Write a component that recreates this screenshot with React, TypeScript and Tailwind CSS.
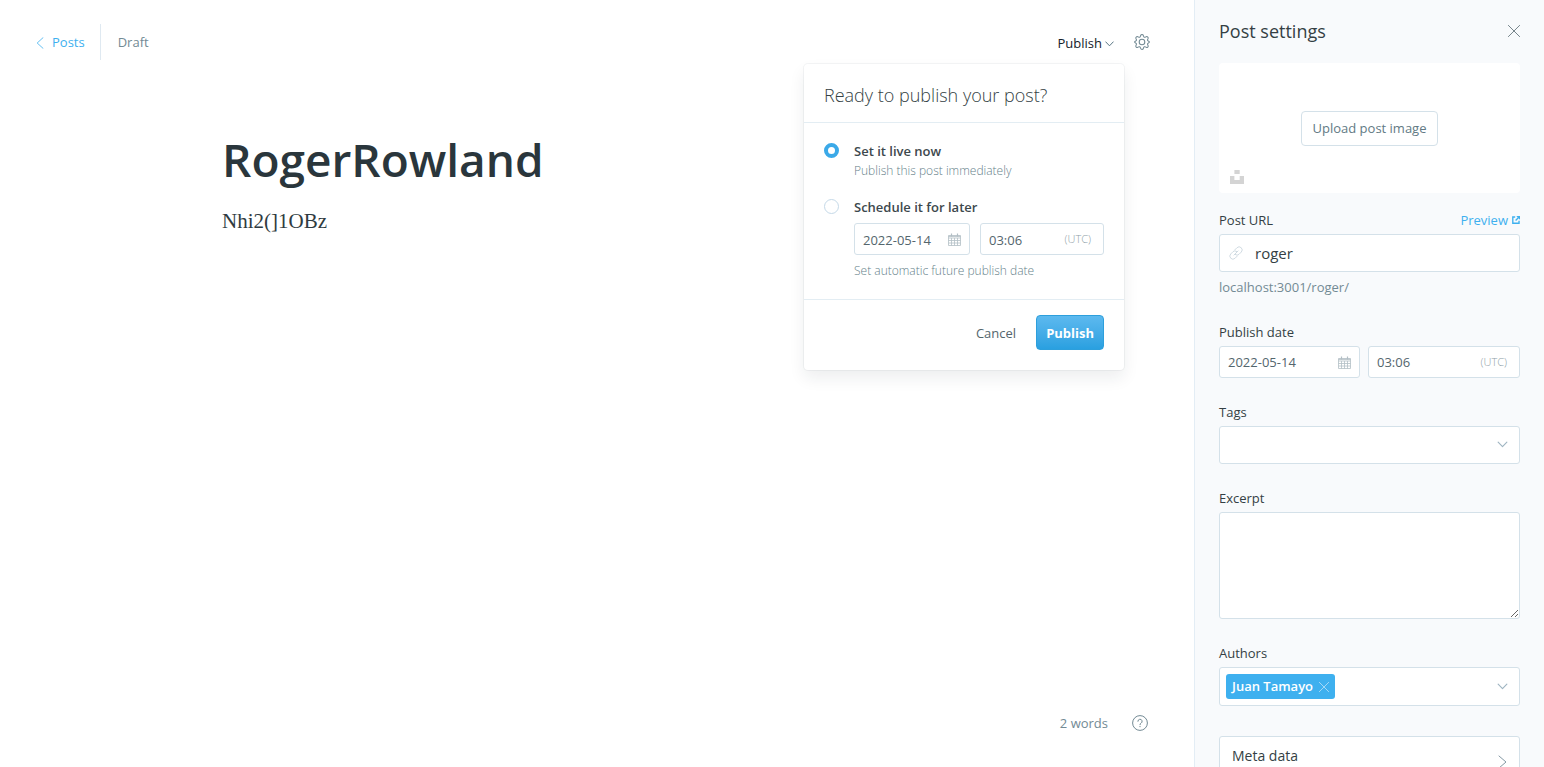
import React, { useState } from "react";
import type { ReactNode } from "react";

type IconProps = { className?: string };

function ArrowLeft({ className }: IconProps) {
  return (
    <svg viewBox="0 0 8 12" className={className} fill="none" stroke="currentColor" strokeWidth=".8" aria-hidden="true">
      <path d="M7 .7 1.2 6 7 11.3" strokeLinecap="round" />
    </svg>
  );
}

function ArrowRight({ className }: IconProps) {
  return (
    <svg viewBox="0 0 9 14" className={className} fill="none" stroke="currentColor" aria-hidden="true">
      <path d="M1 1 8 7 1 13" strokeLinecap="round" />
    </svg>
  );
}

function ArrowDown({ className }: IconProps) {
  return (
    <svg viewBox="0 0 12 8" className={className} fill="none" stroke="currentColor" strokeWidth="1.3" aria-hidden="true">
      <path d="M1 1.2 6 6.4 11 1.2" strokeLinecap="round" strokeLinejoin="round" />
    </svg>
  );
}

function Cross({ className }: IconProps) {
  return (
    <svg viewBox="0 0 12 12" className={className} fill="none" stroke="currentColor" strokeWidth=".8" aria-hidden="true">
      <path d="M.4 .4 11.6 11.6M11.6 .4 .4 11.6" strokeLinecap="round" />
    </svg>
  );
}

function Gear({ className }: IconProps) {
  return (
    <svg viewBox="0 0 24 24" className={className} fill="none" stroke="currentColor" strokeWidth="1.6" strokeLinejoin="round" aria-hidden="true">
      <circle cx="12" cy="12" r="4.2" />
      <path d="M14 2.300a2.100 2.100 0 0 0-4 0l-.4 1.300a2 2 0 0 1-2.700 1.100L5.700 4.100A2.100 2.100 0 0 0 2.900 6.900l.700 1.300a2 2 0 0 1-1.100 2.500l-.700.200a1.200 1.200 0 0 0 0 2.300l.700.200a2 2 0 0 1 1.100 2.500l-.700 1.300a2.100 2.100 0 0 0 2.800 2.800l1.200-.700a2 2 0 0 1 2.700 1.100l.4 1.300a2.100 2.100 0 0 0 4 0l.4-1.300a2 2 0 0 1 2.700-1.100l1.200.700a2.100 2.100 0 0 0 2.800-2.800l-.700-1.300a2 2 0 0 1 1.100-2.500l.700-.200a1.200 1.200 0 0 0 0-2.300l-.700-.200a2 2 0 0 1-1.100-2.500l.700-1.300a2.100 2.100 0 0 0-2.800-2.800l-1.200.600a2 2 0 0 1-2.700-1.100z" />
    </svg>
  );
}

function Help({ className }: IconProps) {
  return (
    <svg viewBox="0 0 16 16" className={className} fill="none" stroke="currentColor" aria-hidden="true">
      <circle cx="8" cy="8" r="7.400" />
      <path d="M5.900 6.300a2.100 2.100 0 1 1 3.100 1.900c-.700.400-1 .800-1 1.500" strokeLinecap="round" />
      <circle cx="8" cy="11.600" r=".700" fill="currentColor" stroke="none" />
    </svg>
  );
}

function Calendar({ className }: IconProps) {
  return (
    <svg viewBox="0 0 13 13" className={className} fill="none" stroke="currentColor" strokeWidth=".8" aria-hidden="true">
      <path d="M.5 2.500H12.500V12.500H.5ZM.5 5H12.500M.5 7.500H12.500M.5 10H12.500M3.500 5V12.500M6.500 5V12.500M9.500 5V12.500" />
      <path d="M3.500 .5V3.500M9.500 .5V3.500" strokeWidth="1.200" />
      <path d="M.5 3.300H12.500" strokeWidth="1" />
    </svg>
  );
}

function LinkIcon({ className }: IconProps) {
  return (
    <svg viewBox="0 0 24 24" className={className} fill="none" stroke="currentColor" strokeWidth="1.700" strokeLinecap="round" strokeLinejoin="round" aria-hidden="true">
      <path d="M8.500 15.500 15.500 8.500" />
      <path d="M9.800 6.800 13.600 3a4.900 4.900 0 0 1 7.400 7.400l-3.800 3.800a4.900 4.900 0 0 1-6.400.500" />
      <path d="M14.200 17.200 10.400 21A4.900 4.900 0 0 1 3 13.600l3.800-3.800a4.900 4.900 0 0 1 6.400-.500" />
    </svg>
  );
}

function ExternalIcon({ className }: IconProps) {
  return (
    <svg viewBox="0 0 10 10" className={className} fill="none" stroke="currentColor" strokeWidth="1.700" aria-hidden="true">
      <path d="M4 1.200H1V9H8.800V6" />
      <path d="M4.500 5.500 8.500 1.500" />
      <path d="M5.300 0H10V4.700Z" fill="currentColor" stroke="none" />
    </svg>
  );
}

function UnsplashIcon({ className }: IconProps) {
  return (
    <svg viewBox="0 0 14 14" className={className} fill="currentColor" aria-hidden="true">
      <path d="M4.400 0H9.700V3.900H4.400ZM9.700 6.100H14V14H0V6.100H4.400V10H9.700Z" />
    </svg>
  );
}

const box = "rounded-[3px] border border-[#d4e1e9] bg-white";

function DateTimeFields({ id, dateClass, gapClass }: { id: string; dateClass: string; gapClass: string }) {
  return (
    <div className={`flex text-[13px] text-[#54666d] ${gapClass}`}>
      <div className={`flex h-8 items-center pl-2 pr-2 ${box} ${dateClass}`}>
        <input id={`${id}-date`} aria-label="Date" defaultValue="2022-05-14" className="w-0 flex-1 bg-transparent pt-[2px] outline-none" />
        <Calendar className="size-[13px] shrink-0 text-[#b3bfc5]" />
      </div>
      <div className={`flex h-8 min-w-0 flex-1 items-center pl-2 pr-3 ${box}`}>
        <input aria-label="Time" defaultValue="03:06" className="w-0 flex-1 bg-transparent pt-[2px] outline-none" />
        <span className="text-[11px] font-light text-[#8fa0a8]">(UTC)</span>
      </div>
    </div>
  );
}

function Field({ id, label, aside, children }: { id: string; label: string; aside?: ReactNode; children: ReactNode }) {
  return (
    <div>
      <div className="mb-[5px] flex h-5 items-center justify-between pt-px leading-5">
        <label htmlFor={id} className="text-[13px] font-medium text-[#343f44]">
          {label}
        </label>
        {aside}
      </div>
      {children}
    </div>
  );
}

function PublishMenu() {
  const [mode, setMode] = useState("now");
  const radio =
    "mt-[2px] size-[15px] shrink-0 appearance-none rounded-full border border-[#c5d9e8] bg-white checked:border-4 checked:border-[#3ba9e8]";
  return (
    <div className="absolute -right-[10px] top-[40px] w-80 rounded-[4px] bg-white shadow-[0_0_0_1px_rgba(99,114,130,0.07),0_8px_16px_rgba(27,39,51,0.08)]">
      <h2 className="border-b border-[#e3edf3] px-5 pb-[14px] pt-[18px] text-[18px] font-light leading-[26px] text-[#343f44]">
        Ready to publish your post?
      </h2>
      <div className="flex flex-col gap-4 border-b border-[#e3edf3] px-5 py-[18px] text-[13px] leading-5">
        <div className="flex gap-[15px]">
          <input type="radio" id="publish-now" name="publish-mode" checked={mode === "now"} onChange={() => setMode("now")} className={radio} />
          <div>
            <label htmlFor="publish-now" className="block font-semibold text-[#3d484d]">
              Set it live now
            </label>
            <p className="text-[12px] font-light text-[#667f8a]">Publish this post immediately</p>
          </div>
        </div>
        <div className="flex gap-[15px]">
          <input type="radio" id="publish-later" name="publish-mode" checked={mode === "later"} onChange={() => setMode("later")} className={radio} />
          <div className="min-w-0 flex-1">
            <label htmlFor="publish-later" className="mb-[6px] block font-semibold text-[#3d484d]">
              Schedule it for later
            </label>
            <DateTimeFields id="schedule" dateClass="w-[116px]" gapClass="gap-[10px]" />
            <p className="mt-[6px] text-[12px] font-light text-[#667f8a]">Set automatic future publish date</p>
          </div>
        </div>
      </div>
      <div className="flex items-center justify-end gap-5 px-5 pb-5 pt-[15px] text-[13px]">
        <button type="button" className="pt-[2px] text-[#54666d]">
          Cancel
        </button>
        <button
          type="button"
          className="h-[35px] rounded-[4px] border border-[#2d9fdc] bg-linear-to-b from-[#5cb9ef] to-[#29a0e0] px-[9px] pt-[2px] font-bold text-white"
        >
          Publish
        </button>
      </div>
    </div>
  );
}

function Editor() {
  return (
    <main className="flex min-w-0 flex-1 flex-col">
      <header className="flex items-center justify-between pl-9 pr-11 pt-6 text-[13px]">
        <div className="flex h-9 items-center">
          <a href="#posts" className="flex h-full items-center gap-2 border-r border-[#dfe9f1] pr-[15px] pt-[2px] text-[#3eb0ef]">
            <ArrowLeft className="h-3 w-2" />
            Posts
          </a>
          <span className="pl-[17px] pt-[2px] text-[#738a94]">Draft</span>
        </div>
        <div className="flex h-9 items-center gap-5">
          <div className="relative flex h-full items-center">
            <button type="button" aria-expanded="true" className="flex items-center gap-[3px] pt-[3px] text-[#15212a]">
              Publish
              <ArrowDown className="h-[6px] w-[9px] text-[#54717f]" />
            </button>
            <PublishMenu />
          </div>
          <button type="button" aria-label="Settings" className="text-[#738a94]">
            <Gear className="size-4" />
          </button>
        </div>
      </header>
      <article className="mx-auto mt-[67px] w-full max-w-[750px] flex-1">
        <h1 className="text-[46px] font-semibold leading-[64px] text-[#2a363c]">RogerRowland</h1>
        <p className="mt-3 font-['Liberation_Serif',serif] text-[21px] leading-9 text-[#2f3b41]">Nhi2(]1OBz</p>
      </article>
      <footer className="flex h-[88px] items-center justify-end gap-6 pr-[46px] text-[13px] text-[#738a94]">
        <span className="pt-[2px]">2 words</span>
        <button type="button" aria-label="Help">
          <Help className="size-4" />
        </button>
      </footer>
    </main>
  );
}

function SettingsPanel() {
  return (
    <aside className="h-full w-[350px] shrink-0 overflow-hidden border-l border-[#e3edf5] bg-[#f8fafc] px-6 pt-[19px]">
      <div className="flex h-6 items-center justify-between">
        <h2 className="text-[18px] font-medium text-[#343f44]">Post settings</h2>
        <button type="button" aria-label="Close" className="text-[#54666d]">
          <Cross className="size-3" />
        </button>
      </div>
      <div className="relative mt-5 flex h-[130px] items-center justify-center rounded-[4px] bg-white">
        <button type="button" className="h-[35px] rounded-[4px] border border-[#d4e1e9] px-[11px] pt-[2px] text-[13px] text-[#627a84]">
          Upload post image
        </button>
        <button type="button" aria-label="Unsplash" className="absolute bottom-[9px] left-[11px] text-[#d4d4d4]">
          <UnsplashIcon className="size-[14px]" />
        </button>
      </div>
      <form className="mt-4 flex flex-col gap-[23px]">
        <Field
          id="post-url"
          label="Post URL"
          aside={
            <a href="#preview" className="flex items-center gap-1 pt-px text-[13px] text-[#3eb0ef]">
              Preview
              <ExternalIcon className="size-2" />
            </a>
          }
        >
          <div className={`flex h-[38px] items-center gap-3 px-[9px] ${box}`}>
            <LinkIcon className="size-[14px] text-[#cfdbe2]" />
            <input id="post-url" defaultValue="roger" className="min-w-0 flex-1 bg-transparent text-[15px] text-[#343f44] outline-none" />
          </div>
          <p className="mt-[5px] text-[13px] leading-[21px] text-[#738a94]">localhost:3001/roger/</p>
        </Field>
        <Field id="publish-date" label="Publish date">
          <DateTimeFields id="publish" dateClass="w-[141px]" gapClass="gap-2" />
        </Field>
        <Field id="tags" label="Tags">
          <div className="relative">
            <select id="tags" className={`block h-[38px] w-full appearance-none px-3 ${box}`}>
              <option></option>
            </select>
            <ArrowDown className="pointer-events-none absolute right-3 top-[15px] h-[7px] w-[11px] text-[#9fb5c2]" />
          </div>
        </Field>
        <Field id="excerpt" label="Excerpt">
          <textarea id="excerpt" className={`block h-[107px] w-full resize px-3 py-2 ${box}`} />
        </Field>
        <Field id="authors" label="Authors">
          <div className={`flex h-[39px] items-center pl-[6px] ${box}`}>
            <span className="flex h-[25px] items-center gap-[6px] rounded-[3px] bg-[#3eb0ef] px-[6px] text-[13px] font-semibold text-white">
              Juan Tamayo
              <button type="button" aria-label="Remove Juan Tamayo" className="text-[#d5edfb]">
                <Cross className="size-[10px]" />
              </button>
            </span>
            <div className="relative flex-1">
              <select id="authors" className="block h-8 w-full appearance-none bg-transparent">
                <option></option>
              </select>
              <ArrowDown className="pointer-events-none absolute right-[11px] top-[12px] h-[7px] w-[11px] text-[#9fb5c2]" />
            </div>
          </div>
        </Field>
        <button type="button" className={`mt-[7px] flex h-[51px] items-center justify-between px-3 text-left ${box}`}>
          <span className="pb-3 text-[14px] font-medium leading-5 text-[#343f44]">Meta data</span>
          <ArrowRight className="h-[14px] w-[9px] text-[#8499a4]" />
        </button>
      </form>
    </aside>
  );
}

export default function App() {
  return (
    <div className="flex h-screen overflow-hidden bg-white font-['Open_Sans','Noto_Sans',sans-serif]">
      <Editor />
      <SettingsPanel />
    </div>
  );
}
